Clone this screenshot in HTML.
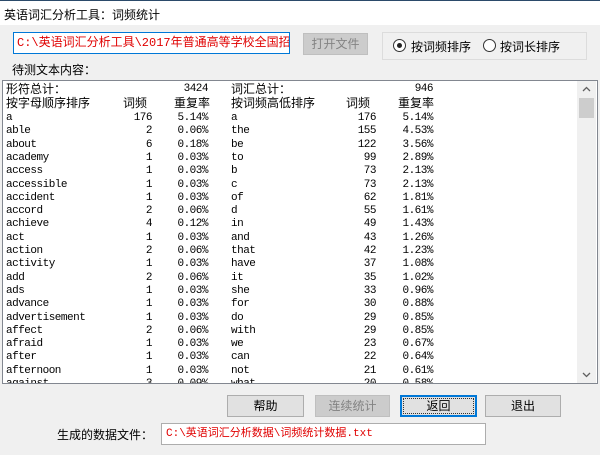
<!DOCTYPE html>
<html><head><meta charset="utf-8"><style>
*{margin:0;padding:0;box-sizing:border-box}
body{width:600px;height:455px;background:#f0f0f0;position:relative;overflow:hidden;font-family:"Liberation Sans","Noto Sans CJK SC",sans-serif;font-size:12px;color:#000}
.abs{position:absolute}
.title{left:0;top:0;width:600px;height:25px;background:#fff;border-top:1px solid #2b4a6a}
.title span{position:absolute;left:4px;top:5px;font-size:12px}
.input{background:#fff;border:1px solid #7a7a7a;color:#e00000;white-space:nowrap;overflow:hidden;font-family:"Liberation Mono","Noto Sans CJK SC",monospace}
.btn{background:#e1e1e1;border:1px solid #adadad;text-align:center;font-size:12px}
.dis{background:#cccccc;border-color:#bfbfbf;color:#838383}
.radio{width:13px;height:13px;border:1px solid #333;border-radius:50%;background:#fff}
.ta{left:2px;top:80px;width:596px;height:304px;background:#fff;border:1px solid #828790;overflow:hidden}
.r{position:absolute;left:0;height:13.3px;line-height:13.3px;font-family:"Liberation Mono","Noto Sans CJK SC",monospace;font-size:11px;letter-spacing:-0.5px;white-space:nowrap;width:560px}
.r span{position:absolute;top:0}
.w1{left:3px}.c1{right:411px;text-align:right}.p1{right:355px;text-align:right}
.w2{left:228px}.c2{right:187px;text-align:right}.p2{right:130px;text-align:right}
.h{font-family:"Liberation Sans","Noto Sans CJK SC",sans-serif;font-size:12px;letter-spacing:0}
.sb{left:577px;top:81px;width:19px;height:302px;background:#f0f0f0}
</style></head><body>
<div class="abs title"><span>英语词汇分析工具：词频统计</span></div>
<div class="abs input" style="left:13px;top:32px;width:277px;height:22px;line-height:20px;padding-left:3px;font-size:12px;border-color:#0078d7">C:\英语词汇分析工具\2017年普通高等学校全国招生统一考试</div>
<div class="abs btn dis" style="left:303px;top:33px;width:65px;height:22px;line-height:20px">打开文件</div>
<div class="abs" style="left:382px;top:32px;width:205px;height:28px;border:1px solid #dcdcdc"></div>
<div class="abs radio" style="left:393px;top:39px"><div style="position:absolute;left:3px;top:3px;width:5px;height:5px;border-radius:50%;background:#222"></div></div>
<div class="abs" style="left:411px;top:38px">按词频排序</div>
<div class="abs radio" style="left:483px;top:39px"></div>
<div class="abs" style="left:500px;top:38px">按词长排序</div>
<div class="abs" style="left:12px;top:61px">待测文本内容：</div>
<div class="abs ta">
<div class="r h" style="top:2px"><span class="w1">形符总计：</span><span class="p1" style="font-family:'Liberation Mono',monospace;font-size:11px;letter-spacing:-0.5px">3424</span><span class="w2">词汇总计：</span><span class="p2" style="font-family:'Liberation Mono',monospace;font-size:11px;letter-spacing:-0.5px">946</span></div>
<div class="r h" style="top:16px"><span class="w1">按字母顺序排序</span><span style="left:120px">词频</span><span style="left:171px">重复率</span><span class="w2">按词频高低排序</span><span style="left:343px">词频</span><span style="left:395px">重复率</span></div>
<div class="r" style="top:31px"><span class="w1">a</span><span class="c1">176</span><span class="p1">5.14%</span><span class="w2">a</span><span class="c2">176</span><span class="p2">5.14%</span></div>
<div class="r" style="top:44.3px"><span class="w1">able</span><span class="c1">2</span><span class="p1">0.06%</span><span class="w2">the</span><span class="c2">155</span><span class="p2">4.53%</span></div>
<div class="r" style="top:57.6px"><span class="w1">about</span><span class="c1">6</span><span class="p1">0.18%</span><span class="w2">be</span><span class="c2">122</span><span class="p2">3.56%</span></div>
<div class="r" style="top:70.9px"><span class="w1">academy</span><span class="c1">1</span><span class="p1">0.03%</span><span class="w2">to</span><span class="c2">99</span><span class="p2">2.89%</span></div>
<div class="r" style="top:84.2px"><span class="w1">access</span><span class="c1">1</span><span class="p1">0.03%</span><span class="w2">b</span><span class="c2">73</span><span class="p2">2.13%</span></div>
<div class="r" style="top:97.5px"><span class="w1">accessible</span><span class="c1">1</span><span class="p1">0.03%</span><span class="w2">c</span><span class="c2">73</span><span class="p2">2.13%</span></div>
<div class="r" style="top:110.8px"><span class="w1">accident</span><span class="c1">1</span><span class="p1">0.03%</span><span class="w2">of</span><span class="c2">62</span><span class="p2">1.81%</span></div>
<div class="r" style="top:124.1px"><span class="w1">accord</span><span class="c1">2</span><span class="p1">0.06%</span><span class="w2">d</span><span class="c2">55</span><span class="p2">1.61%</span></div>
<div class="r" style="top:137.4px"><span class="w1">achieve</span><span class="c1">4</span><span class="p1">0.12%</span><span class="w2">in</span><span class="c2">49</span><span class="p2">1.43%</span></div>
<div class="r" style="top:150.7px"><span class="w1">act</span><span class="c1">1</span><span class="p1">0.03%</span><span class="w2">and</span><span class="c2">43</span><span class="p2">1.26%</span></div>
<div class="r" style="top:164px"><span class="w1">action</span><span class="c1">2</span><span class="p1">0.06%</span><span class="w2">that</span><span class="c2">42</span><span class="p2">1.23%</span></div>
<div class="r" style="top:177.3px"><span class="w1">activity</span><span class="c1">1</span><span class="p1">0.03%</span><span class="w2">have</span><span class="c2">37</span><span class="p2">1.08%</span></div>
<div class="r" style="top:190.6px"><span class="w1">add</span><span class="c1">2</span><span class="p1">0.06%</span><span class="w2">it</span><span class="c2">35</span><span class="p2">1.02%</span></div>
<div class="r" style="top:203.9px"><span class="w1">ads</span><span class="c1">1</span><span class="p1">0.03%</span><span class="w2">she</span><span class="c2">33</span><span class="p2">0.96%</span></div>
<div class="r" style="top:217.2px"><span class="w1">advance</span><span class="c1">1</span><span class="p1">0.03%</span><span class="w2">for</span><span class="c2">30</span><span class="p2">0.88%</span></div>
<div class="r" style="top:230.5px"><span class="w1">advertisement</span><span class="c1">1</span><span class="p1">0.03%</span><span class="w2">do</span><span class="c2">29</span><span class="p2">0.85%</span></div>
<div class="r" style="top:243.8px"><span class="w1">affect</span><span class="c1">2</span><span class="p1">0.06%</span><span class="w2">with</span><span class="c2">29</span><span class="p2">0.85%</span></div>
<div class="r" style="top:257.1px"><span class="w1">afraid</span><span class="c1">1</span><span class="p1">0.03%</span><span class="w2">we</span><span class="c2">23</span><span class="p2">0.67%</span></div>
<div class="r" style="top:270.4px"><span class="w1">after</span><span class="c1">1</span><span class="p1">0.03%</span><span class="w2">can</span><span class="c2">22</span><span class="p2">0.64%</span></div>
<div class="r" style="top:283.7px"><span class="w1">afternoon</span><span class="c1">1</span><span class="p1">0.03%</span><span class="w2">not</span><span class="c2">21</span><span class="p2">0.61%</span></div>
<div class="r" style="top:297px"><span class="w1">against</span><span class="c1">3</span><span class="p1">0.09%</span><span class="w2">what</span><span class="c2">20</span><span class="p2">0.58%</span></div>
</div>
<div class="abs sb">
<svg width="19" height="17" style="position:absolute;top:0;left:0"><path d="M6 10 L9.5 6.5 L13 10" stroke="#606060" stroke-width="1.3" fill="none"/></svg>
<div style="position:absolute;left:2px;top:17px;width:15px;height:20px;background:#cdcdcd"></div>
<svg width="19" height="17" style="position:absolute;bottom:0;left:0"><path d="M6 7 L9.5 10.5 L13 7" stroke="#606060" stroke-width="1.3" fill="none"/></svg>
</div>
<div class="abs btn" style="left:227px;top:395px;width:77px;height:22px;line-height:20px">帮助</div>
<div class="abs btn dis" style="left:315px;top:395px;width:75px;height:22px;line-height:20px">连续统计</div>
<div class="abs btn" style="left:400px;top:395px;width:77px;height:22px;line-height:18px;border:2px solid #0078d7"><div style="position:absolute;inset:1px;border:1px dotted #333"></div>返回</div>
<div class="abs btn" style="left:485px;top:395px;width:76px;height:22px;line-height:20px">退出</div>
<div class="abs" style="left:57px;top:426px">生成的数据文件：</div>
<div class="abs input" style="left:161px;top:423px;width:325px;height:22px;line-height:20px;padding-left:4px;font-size:11px;border-color:#adadad">C:\英语词汇分析数据\词频统计数据.txt</div>
</body></html>
